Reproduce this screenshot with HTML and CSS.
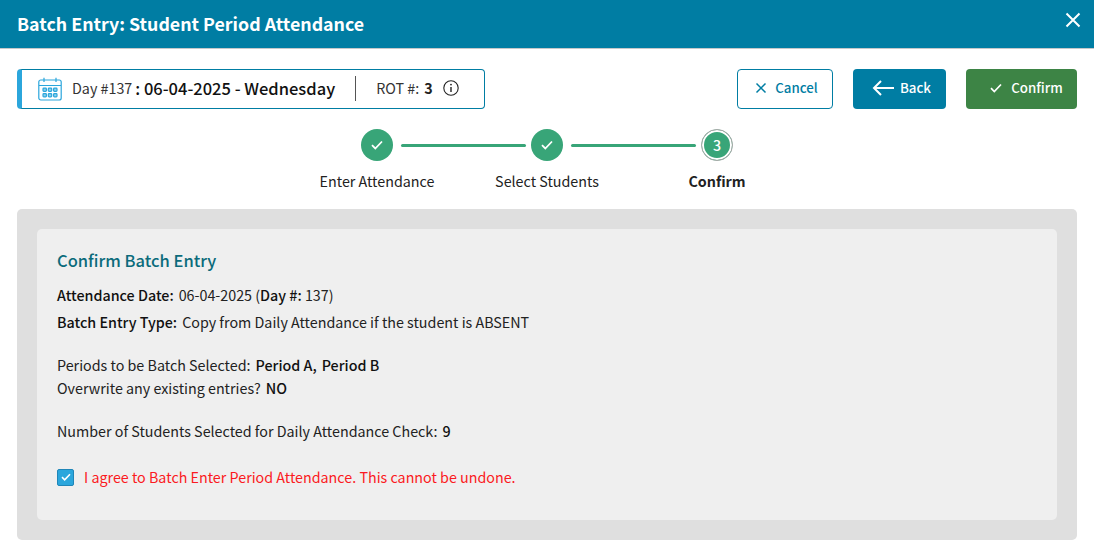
FILE: index.html
```html
<!DOCTYPE html>
<html lang="en">
<head>
<meta charset="utf-8">
<title>Batch Entry</title>
<link rel="stylesheet" href="styles.css">
</head>
<body>
<header class="titlebar">
  <h1 class="title">Batch Entry: Student Period Attendance</h1>
  <svg class="close" width="16" height="16" viewBox="0 0 16 16"><path d="M1.5 1.5L14.5 14.5M14.5 1.5L1.5 14.5" stroke="#fff" stroke-width="2" fill="none"/></svg>
</header>
<section class="toolbar">
  <div class="daybox">
    <svg class="cal" width="24" height="24" viewBox="0 0 24 24" fill="none" stroke="#2ba6dc" stroke-width="1.2">
      <rect x="0.8" y="3" width="22.4" height="20" rx="2"/>
      <path d="M1 8.5H23M6 0.8V5M18 0.8V5"/>
      <g fill="#8fd0ec">
      <rect x="5" y="11.2" width="3.4" height="3.2" rx=".8"/><rect x="10.3" y="11.2" width="3.4" height="3.2" rx=".8"/><rect x="15.6" y="11.2" width="3.4" height="3.2" rx=".8"/>
      <rect x="5" y="16.6" width="3.4" height="3.2" rx=".8"/><rect x="10.3" y="16.6" width="3.4" height="3.2" rx=".8"/><rect x="15.6" y="16.6" width="3.4" height="3.2" rx=".8"/>
      </g>
    </svg>
    <span class="daynum">Day #137</span>
    <span class="daydate">: 06-04-2025 - Wednesday</span>
    <span class="divider"></span>
    <span class="rot">ROT #:</span>
    <strong class="rotval">3</strong>
    <svg class="info" width="16" height="16" viewBox="0 0 16 16" fill="none" stroke="#222" stroke-width="1.1"><circle cx="8" cy="8" r="7.2"/><path d="M8 7V12" stroke-width="1.4"/><circle cx="8" cy="4.6" r=".9" fill="#222" stroke="none"/></svg>
  </div>
  <div class="actions">
    <button class="btn btn-cancel"><svg width="12" height="12" viewBox="0 0 12 12"><path d="M1.5 1.5L10.5 10.5M10.5 1.5L1.5 10.5" stroke="#007da3" stroke-width="1.5" fill="none"/></svg>Cancel</button>
    <button class="btn btn-back"><svg width="22" height="16" viewBox="0 0 22 16" fill="none" stroke="#fff" stroke-width="2"><path d="M22 8H2M9 1L2 8L9 15"/></svg>Back</button>
    <button class="btn btn-confirm"><svg width="12" height="10" viewBox="0 0 12 10" fill="none" stroke="#fff" stroke-width="1.7"><path d="M1 5.2L4.3 8.5L11 1.5"/></svg>Confirm</button>
  </div>
</section>
<ol class="stepper">
  <li class="step">
    <span class="dot"><svg width="12" height="10" viewBox="0 0 12 10" fill="none" stroke="#fff" stroke-width="1.8"><path d="M1 5.2L4.3 8.5L11 1.5"/></svg></span>
    <span class="steplabel">Enter Attendance</span>
  </li>
  <li class="connector"></li>
  <li class="step">
    <span class="dot"><svg width="12" height="10" viewBox="0 0 12 10" fill="none" stroke="#fff" stroke-width="1.8"><path d="M1 5.2L4.3 8.5L11 1.5"/></svg></span>
    <span class="steplabel">Select Students</span>
  </li>
  <li class="connector"></li>
  <li class="step step-current">
    <span class="dot dot-current">3</span>
    <span class="steplabel">Confirm</span>
  </li>
</ol>
<main class="panel">
  <div class="card">
    <h2 class="cardtitle">Confirm Batch Entry</h2>
    <p class="line"><b>Attendance Date:</b><span class="gap"></span>06-04-2025 (<b>Day #:</b> 137)</p>
    <p class="line line-second"><b>Batch Entry Type:</b><span class="gap"></span>Copy from Daily Attendance if the student is ABSENT</p>
    <p class="line line-group">Periods to be Batch Selected:<span class="gap"></span><b>Period A,</b><span class="gap"></span><b>Period B</b></p>
    <p class="line line-tight">Overwrite any existing entries?<span class="gap"></span><b>NO</b></p>
    <p class="line line-group">Number of Students Selected for Daily Attendance Check:<span class="gap"></span><b>9</b></p>
    <label class="agree">
      <span class="check"><svg width="10" height="8" viewBox="0 0 12 10" fill="none" stroke="#fff" stroke-width="2"><path d="M1 5.2L4.3 8.5L11 1.5"/></svg></span>
      I agree to Batch Enter Period Attendance. This cannot be undone.
    </label>
  </div>
</main>
</body>
</html>
```
FILE: styles.css
```css
* { box-sizing: border-box; }
html, body { margin: 0; padding: 0; }
body {
  width: 1094px;
  height: 550px;
  overflow: hidden;
  background: #fff;
  color: #222;
  font-family: "Noto Sans CJK JP", "Noto Sans", sans-serif;
  font-size: 14.3px;
  line-height: 22px;
}
.titlebar {
  height: 49px;
  background: #007da3;
  border-bottom: 1px solid #c4c8ca;
  display: flex;
  align-items: center;
  justify-content: space-between;
  padding: 0 13px 2px 17px;
}
.title { margin: 0; color: #fff; font-size: 17.8px; font-weight: 700; line-height: 26px; }
.close { margin-top: -6px; }
.toolbar {
  display: flex;
  justify-content: space-between;
  padding: 20px 17px 0;
  height: 80px;
}
.daybox {
  width: 468px;
  height: 40px;
  border: 1px solid #007da3;
  border-left: 5px solid #2ba6dc;
  border-radius: 4px;
  display: flex;
  align-items: center;
  padding: 0 0 2px 16px;
}
.cal { flex: none; margin: 2px 10px 0 0; }
.daynum { font-size: 14.3px; color: #333; }
.daydate { font-size: 16.5px; font-weight: 500; color: #111; margin-left: 3px; }
.divider { width: 1px; height: 25px; background: #555; margin: 0 20px; }
.rot { color: #333; }
.rotval { margin-left: 5px; font-weight: 700; }
.info { margin-left: 10px; }
.actions { display: flex; gap: 20px; }
.btn {
  height: 40px;
  border-radius: 4px;
  border: 1px solid transparent;
  font: inherit;
  font-weight: 500;
  font-size: 13.3px;
  display: flex;
  align-items: center;
  justify-content: center;
  padding: 0 0 2px;
  color: #fff;
}
.btn-cancel { width: 96px; background: #fff; border-color: #007da3; color: #007da3; gap: 8px; padding-left: 3px; }
.btn-back { width: 93px; background: #007da3; gap: 6px; padding-left: 4px; }
.btn-confirm { width: 111px; background: #3d8445; gap: 9px; padding-left: 10px; }
.stepper {
  list-style: none;
  margin: 0;
  padding: 0 0 0 361px;
  display: flex;
  align-items: flex-start;
  height: 80px;
}
.step {
  position: relative;
  width: 32px;
  height: 32px;
  flex: none;
  display: flex;
  justify-content: center;
}
.dot {
  width: 32px;
  height: 32px;
  border-radius: 50%;
  background: #38a578;
  display: flex;
  align-items: center;
  justify-content: center;
  color: #fff;
  font-weight: 500;
}
.dot-current {
  background: #38a578;
  border: 1px solid #a8a8a8;
  box-shadow: inset 0 0 0 2px #fff;
  font-size: 14.3px;
}
.steplabel {
  position: absolute;
  top: 41px;
  left: 50%;
  transform: translateX(-50%);
  white-space: nowrap;
  font-size: 14.3px;
  color: #222;
}
.step-current .steplabel { font-weight: 700; }
.connector { width: 125px; height: 3px; background: #38a578; margin: 15px 5px 0 8px; border-radius: 2px; flex: none; }
.panel {
  margin: 0 17px;
  height: 331px;
  background: #dfdfdf;
  border-radius: 5px;
  padding: 20px;
}
.card {
  height: 291px;
  background: #efefef;
  border-radius: 5px;
  padding: 19px 20px 20px;
}
.cardtitle { margin: 0 0 11px; color: #0b6b7b; font-size: 16.5px; font-weight: 500; line-height: 24px; }
.line { margin: 0; font-size: 14.3px; line-height: 23px; }
.line b { font-weight: 500; color: #111; }
.line-second { margin-top: 4px; }
.line-group { margin-top: 20px; }
.line-tight { margin-top: 0; }
.gap { display: inline-block; width: 5px; }
.agree {
  display: flex;
  align-items: center;
  gap: 10px;
  margin-top: 24px;
  color: #fb1a22;
  font-size: 14.3px;
}
.check {
  width: 17px;
  height: 17px;
  background: #2ba6dc;
  border: 1px solid #1f86b8;
  border-radius: 2px;
  display: flex;
  align-items: center;
  justify-content: center;
}
```
